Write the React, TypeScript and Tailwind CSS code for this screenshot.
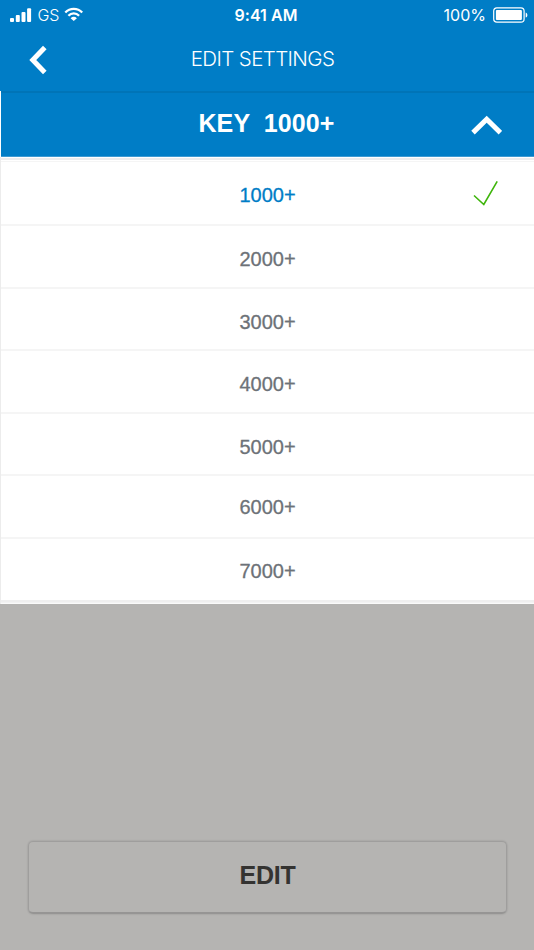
import React, { useState } from 'react';

const OPTIONS = [
  { label: '1000+', row: 'h-[64px] pt-[4px]' },
  { label: '2000+', row: 'h-[63px] pt-[5px]' },
  { label: '3000+', row: 'h-[62px] pt-[5px]' },
  { label: '4000+', row: 'h-[63px] pt-[5px]' },
  { label: '5000+', row: 'h-[62px] pt-[5px]' },
  { label: '6000+', row: 'h-[63px]' },
  { label: '7000+', row: 'h-[61px] pt-[2px]' },
];

const StatusBar: React.FC = () => (
  <div className="h-[30px] flex items-center justify-between pl-[10px] pr-[6px] text-[16px] leading-[30px]">
    <div className="flex items-center w-[178px]">
      <svg width="22" height="14" viewBox="0 0 22 14" fill="currentColor">
        <rect x="0" y="10" width="4" height="4" rx="1" />
        <rect x="5.8" y="7" width="4" height="7" rx="1" />
        <rect x="11.5" y="4" width="4" height="10" rx="1" />
        <rect x="17.1" y="0.2" width="4" height="13.8" rx="1" />
      </svg>
      <span className="ml-[5.5px] w-[22px] font-light text-[16px] tracking-[-0.2px]">GS</span>
      <svg className="ml-[4.5px] -mt-[2px]" width="20" height="14" viewBox="0 0 20 14" fill="none" stroke="currentColor" strokeWidth="2.3">
        <path d="M1.3 5.5C6.1 0.6 13.4 0.6 18.2 5.5" />
        <path d="M4.4 8.7C7.4 5.7 12.1 5.7 15.1 8.7" />
        <path d="M6.6 11.2C8.5 9.3 11 9.3 12.9 11.2L9.75 14Z" fill="currentColor" stroke="none" />
      </svg>
    </div>
    <span className="relative -left-[3px] font-semibold tracking-[0.05px]">9:41 AM</span>
    <div className="flex items-center justify-end w-[178px]">
      <span>100%</span>
      <svg className="ml-[7px] -mr-[1px]" width="36" height="16" viewBox="0 0 36 16" fill="none">
        <rect x="0.7" y="0.9" width="30.4" height="14.2" rx="3.2" stroke="currentColor" strokeWidth="1.2" />
        <rect x="2.9" y="3" width="26" height="10" rx="1" fill="currentColor" />
        <path d="M32.7 5.4C34.9 6.2 34.9 9.8 32.7 10.6Z" fill="currentColor" />
      </svg>
    </div>
  </div>
);

const App: React.FC = () => {
  const [selected, setSelected] = useState('1000+');
  const [open, setOpen] = useState(true);

  return (
    <div className="w-[534px] h-[950px] flex flex-col overflow-hidden bg-[#b5b4b2] font-['Liberation_Sans',Arial,sans-serif]">
      <header className="h-[91px] shrink-0 bg-[#007dc6] text-white font-['Inter',sans-serif]">
        <StatusBar />
        <div className="h-[61px] flex items-start">
          <button className="w-[95px] pl-[29px] pt-[15px]" aria-label="Back">
            <svg width="20" height="30" viewBox="0 0 20 30" fill="none" stroke="currentColor" strokeWidth="5">
              <path d="M15.8 2.6L3.8 15L15.8 27.4" />
            </svg>
          </button>
          <h1 className="flex-1 text-center text-[20.5px] leading-[58px] font-light tracking-[-0.6px]">EDIT SETTINGS</h1>
          <div className="w-[104px]" />
        </div>
      </header>

      <div className="shrink-0 border-l border-white bg-[#007dc6]">
        <button
          onClick={() => setOpen(!open)}
          className="w-full h-[66px] flex items-center border-t-2 border-t-[#0074b7] border-b border-b-[#3d9ad2] text-white"
        >
          <span className="w-[72px]" />
          <span className="flex-1 pb-[4px] text-center whitespace-pre text-[25px] font-bold leading-[58px] tracking-[0.1px]">KEY  1000+</span>
          <span className="w-[74px] pl-[11px]">
            <svg width="31" height="20" viewBox="0 0 31 20" fill="none" stroke="currentColor" strokeWidth="5">
              <path d="M2 17.6L15.7 4.2L29.4 17.6" />
            </svg>
          </span>
        </button>
      </div>

      {open && (
        <div className="shrink-0 bg-white border-l border-[#ececec]">
          <div className="h-px bg-white" />
          <div className="h-[2px] bg-[#ededee]" />
          <div className="h-px bg-white" />
          <div className="h-px bg-[#f5f5f5]" />
          <ul>
            {OPTIONS.map(({ label, row }, i) => (
              <li
                key={label}
                onClick={() => setSelected(label)}
                className={`flex items-center text-[20px] ${row} ${i < OPTIONS.length - 1 ? 'border-b-2 border-[#f5f5f5]' : ''} ${
                  label === selected ? 'text-[#007dc6]' : 'text-[#6d7278]'
                }`}
              >
                <span className="w-[74px]" />
                <span className="flex-1 text-center leading-[24px] [-webkit-text-stroke:0.3px_currentColor]">{label}</span>
                <span className="w-[74px] pl-[13px]">
                  {label === selected && (
                    <svg className="mb-[3px]" width="26" height="27" viewBox="0 0 26 27" fill="none" stroke="#3fb50c" strokeWidth="1.6">
                      <path d="M1 15.5L10.8 24.5L24.2 1.3" />
                    </svg>
                  )}
                </span>
              </li>
            ))}
          </ul>
          <div className="h-[2px] bg-[#efefef]" />
          <div className="h-px bg-[#f3f3f3]" />
          <div className="h-px bg-[#fafafa]" />
        </div>
      )}

      <div className="flex-1 flex flex-col justify-end px-[28px] pb-[36px]">
        <button className="h-[73px] w-[479px] pb-[2px] rounded-[5px] border border-[#9f9e9d] border-b-2 border-b-[#969594] shadow-[0_0_2px_rgba(0,0,0,0.2)] text-[25px] font-bold tracking-[-0.2px] text-[#343331]">
          EDIT
        </button>
      </div>
    </div>
  );
};

export default App;
